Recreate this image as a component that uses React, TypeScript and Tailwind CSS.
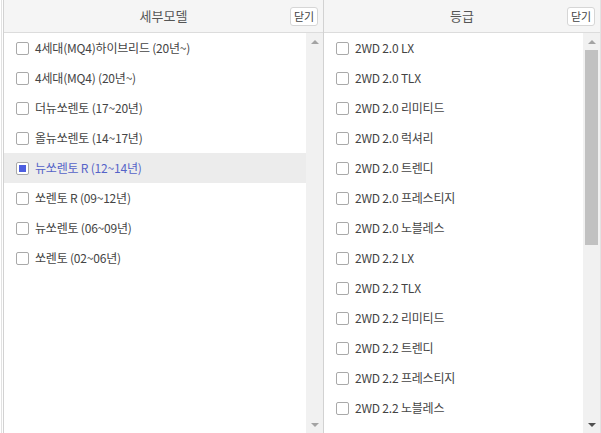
import React from "react";

const models = [
  "4세대(MQ4)하이브리드 (20년~)",
  "4세대(MQ4) (20년~)",
  "더뉴쏘렌토 (17~20년)",
  "올뉴쏘렌토 (14~17년)",
  "뉴쏘렌토 R (12~14년)",
  "쏘렌토 R (09~12년)",
  "뉴쏘렌토 (06~09년)",
  "쏘렌토 (02~06년)",
];

const grades = [
  "2WD 2.0 LX",
  "2WD 2.0 TLX",
  "2WD 2.0 리미티드",
  "2WD 2.0 럭셔리",
  "2WD 2.0 트렌디",
  "2WD 2.0 프레스티지",
  "2WD 2.0 노블레스",
  "2WD 2.2 LX",
  "2WD 2.2 TLX",
  "2WD 2.2 리미티드",
  "2WD 2.2 트렌디",
  "2WD 2.2 프레스티지",
  "2WD 2.2 노블레스",
];

function Header({ title }: { title: string }) {
  return (
    <div className="relative h-[33px] shrink-0 border-b border-[#dcdcdc] bg-[#f5f5f5] flex items-center justify-center">
      <span className="text-[13px] text-[#555]">{title}</span>
      <button className="absolute right-[5px] top-[7px] h-[19px] w-[28px] rounded-[3px] border border-[#d6d6d6] bg-white text-[11px] leading-none text-[#444]">
        닫기
      </button>
    </div>
  );
}

function Row({ label, checked }: { label: string; checked?: boolean }) {
  return (
    <div
      className={`h-[30px] shrink-0 flex items-center pl-[12px] ${
        checked ? "bg-[#ececec]" : ""
      }`}
    >
      <span className="w-[13px] h-[13px] rounded-[2px] border border-[#a9a9a9] bg-white flex items-center justify-center">
        {checked && <span className="w-[7px] h-[7px] bg-[#4d5ee0]" />}
      </span>
      <span
        className={`ml-[6px] text-[12px] tracking-[-0.2px] ${
          checked ? "text-[#5563c8]" : "text-[#444]"
        }`}
      >
        {label}
      </span>
    </div>
  );
}

function ScrollBar({ thumb, dark }: { thumb?: boolean; dark?: boolean }) {
  return (
    <div className="w-[17px] shrink-0 bg-[#f1f1f1] flex flex-col items-center">
      <div className="h-[17px] flex items-center justify-center">
        <span className="w-0 h-0 border-x-[4px] border-x-transparent border-b-[4px] border-b-[#a3a3a3]" />
      </div>
      <div className="flex-1 w-full px-[2px]">
        {thumb && <div className="h-[195px] bg-[#c1c1c1]" />}
      </div>
      <div className="h-[17px] flex items-center justify-center">
        <span
          className={`w-0 h-0 border-x-[4px] border-x-transparent border-t-[4px] ${
            dark ? "border-t-[#505050]" : "border-t-[#a3a3a3]"
          }`}
        />
      </div>
    </div>
  );
}

export default function App() {
  return (
    <div
      className="w-[601px] h-[433px] flex bg-white overflow-hidden"
      style={{ fontFamily: '"Noto Sans CJK KR", "Noto Sans", sans-serif' }}
    >
      <div className="ml-[1px] w-[323px] flex flex-col border-l border-[#e2e2e2] pl-[1px]">
        <div className="flex-1 flex flex-col border-l border-[#d2d2d2] border-r">
          <Header title="세부모델" />
          <div className="flex-1 flex min-h-0">
            <div className="flex-1 flex flex-col">
              {models.map((m, i) => (
                <Row key={m} label={m} checked={i === 4} />
              ))}
            </div>
            <ScrollBar />
          </div>
        </div>
      </div>
      <div className="flex-1 flex flex-col border-r border-[#e2e2e2]">
        <Header title="등급" />
        <div className="flex-1 flex min-h-0">
          <div className="flex-1 flex flex-col overflow-hidden">
            {grades.map((g) => (
              <Row key={g} label={g} />
            ))}
          </div>
          <ScrollBar thumb dark />
        </div>
      </div>
    </div>
  );
}
